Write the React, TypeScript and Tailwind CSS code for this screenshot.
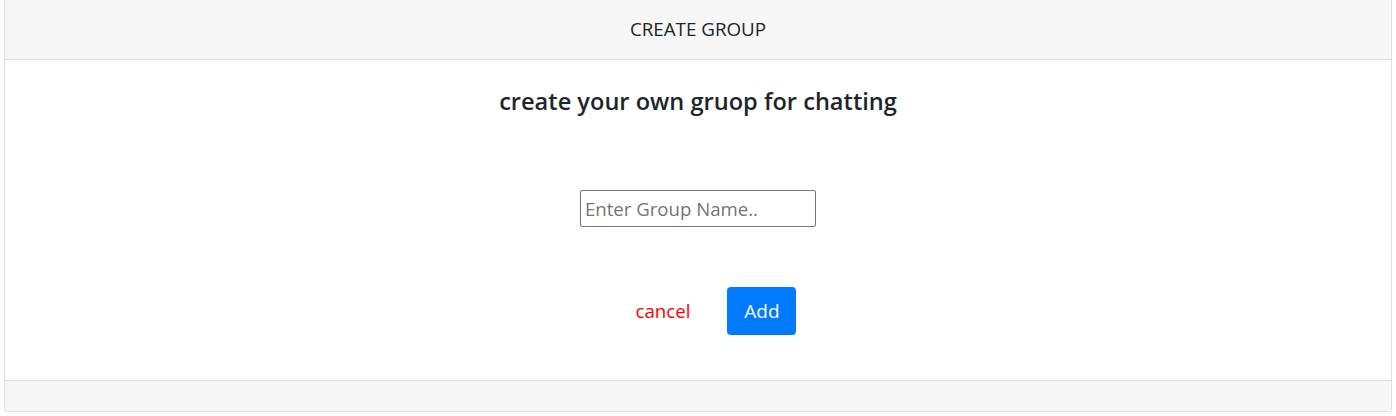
export default function App() {
  return (
    <div className="w-[1396px] h-[416px] bg-white px-[4px] pb-[4px]" style={{ fontFamily: '"Open Sans", "Noto Sans", sans-serif' }}>
      <div className="flex flex-col h-full border border-t-0 border-[#dfdfdf] rounded-b-[4px] overflow-hidden">
        <div className="h-[60px] flex-none bg-[#f7f7f7] border-b border-[#dfdfdf] flex items-center justify-center text-[18.8px] text-[#212529]">
          CREATE GROUP
        </div>
        <div className="flex-1 flex flex-col items-center">
          <h4 className="mt-[25px] text-[23.6px] font-semibold text-[#212529] leading-[32px]">create your own gruop for chatting</h4>
          <input
            placeholder="Enter Group Name.."
            className="mt-[73px] w-[236px] h-[37px] border border-[#767676] rounded-[2px] px-[4px] text-[18.6px] placeholder:text-[#757575] outline-none"
          />
          <div className="mt-[60px] pl-[36px] flex items-center gap-[37px]">
            <span className="text-[18.7px] text-[#ff0000]">cancel</span>
            <button className="w-[69px] h-[48px] bg-[#007bff] text-white rounded-[4px] text-[19px]">Add</button>
          </div>
        </div>
        <div className="h-[31px] flex-none bg-[#f7f7f7] border-t border-[#dfdfdf]" />
      </div>
    </div>
  );
}
